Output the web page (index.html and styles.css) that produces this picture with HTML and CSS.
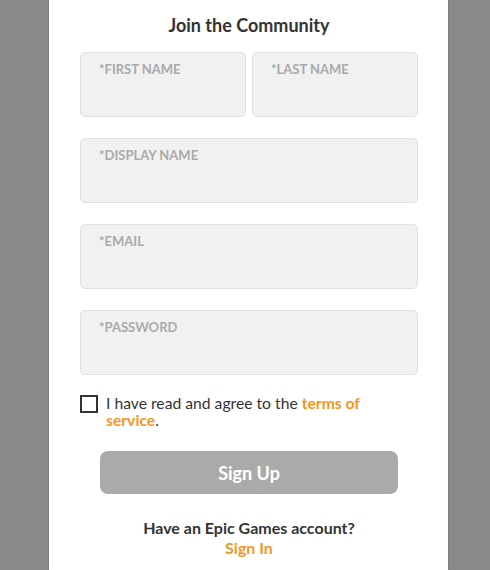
FILE: index.html
```html
<!DOCTYPE html>
<html lang="en">
<head>
  <meta charset="UTF-8">
  <title>Join the Community</title>
  <link rel="stylesheet" href="styles.css">
</head>
<body>
  <div class="signup-card">
    <h2 class="signup-title">Join the Community</h2>

    <form class="signup-form">
      <div class="field-row">
        <label class="field">
          <span class="field-label">*First Name</span>
          <input type="text">
        </label>
        <label class="field">
          <span class="field-label">*Last Name</span>
          <input type="text">
        </label>
      </div>
      <label class="field">
        <span class="field-label">*Display Name</span>
        <input type="text">
      </label>
      <label class="field">
        <span class="field-label">*Email</span>
        <input type="text">
      </label>
      <label class="field">
        <span class="field-label">*Password</span>
        <input type="password">
      </label>

      <label class="agree-row">
        <span class="checkbox"></span>
        <span class="agree-text">I have read and agree to the <a href="#">terms of service</a>.</span>
      </label>

      <button type="button" class="signup-btn">Sign Up</button>
    </form>

    <div class="signin">
      <b>Have an Epic Games account?</b>
      <a href="#">Sign In</a>
    </div>
  </div>
</body>
</html>
```

FILE: styles.css
```css
body {
  margin: 0;
  background: #898989;
  font-family: Lato, 'Open Sans', sans-serif;
  color: #333;
  display: flex;
  justify-content: center;
}
.signup-card {
  width: 399px;
  height: 570px;
  margin-left: 7px;
  background: #fff;
  box-shadow: 0 0 2px rgba(0, 0, 0, 0.25);
  box-sizing: border-box;
  padding: 14px 30px 0 31px;
}
.signup-title {
  margin: 0;
  text-align: center;
  font-size: 18px;
  font-weight: 700;
  line-height: 22px;
  color: #333;
}
.signup-form {
  margin-top: 16px;
  display: flex;
  flex-direction: column;
  gap: 21px;
}
.field-row {
  display: flex;
  gap: 6px;
}
.field-row .field {
  flex: 1;
}
.field {
  display: block;
  height: 65px;
  box-sizing: border-box;
  background: #f1f1f1;
  border: 1px solid #e0e0e0;
  border-radius: 5px;
  padding: 9px 18px 0;
}
.field-label {
  display: block;
  font-size: 13px;
  font-weight: 700;
  line-height: 15px;
  text-transform: uppercase;
  color: #aaa;
}
.field input {
  width: 100%;
  border: none;
  background: transparent;
  outline: none;
  font-family: inherit;
  font-size: 15px;
  padding: 4px 0;
}
.agree-row {
  display: flex;
  align-items: flex-start;
  gap: 8px;
  margin-top: -1px;
}
.checkbox {
  flex: none;
  width: 14px;
  height: 14px;
  border: 2px solid #333;
}
.agree-text {
  width: 270px;
  font-size: 15.7px;
  line-height: 17px;
}
.agree-text a,
.signin a {
  color: #f7941d;
  font-weight: 700;
  text-decoration: none;
}
.signup-btn {
  margin: 1px 20px 0;
  height: 43px;
  border: none;
  border-radius: 8px;
  background: #aaa;
  color: #fff;
  font-family: inherit;
  font-size: 18px;
  font-weight: 700;
}
.signin {
  margin-top: 24px;
  text-align: center;
  font-size: 16px;
  line-height: 20px;
  display: flex;
  flex-direction: column;
}
```
